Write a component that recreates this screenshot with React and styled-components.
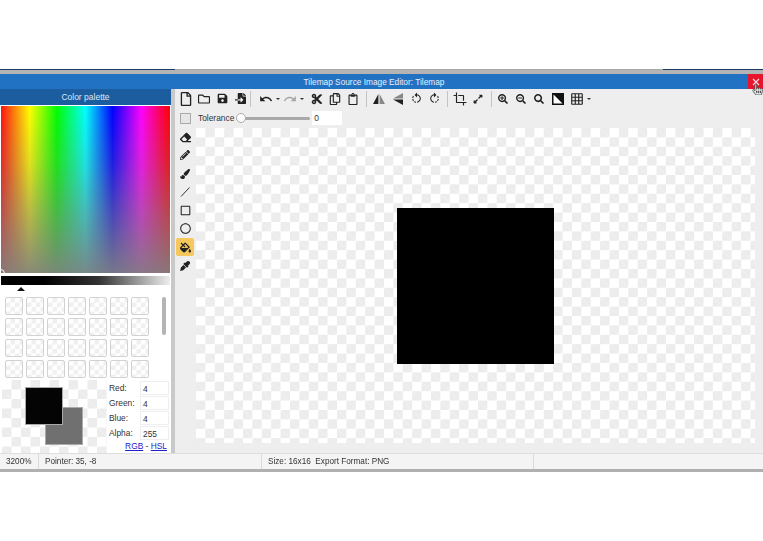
import React from 'react';
import styled, { createGlobalStyle, css } from 'styled-components';
import {
  FaRegFile, FaRegFolder, FaSave, FaFileImport, FaCut, FaRegCopy, FaRegClipboard,
  FaExpandAlt, FaSearchPlus, FaSearchMinus, FaSearch, FaEraser, FaPencilAlt, FaPaintBrush,
  FaFillDrip, FaEyeDropper, FaRegSquare, FaRegCircle, FaHandPointer,
} from 'react-icons/fa';
import { MdRotateLeft, MdRotateRight, MdGridOn, MdUndo, MdRedo, MdCrop } from 'react-icons/md';

const GlobalStyle = createGlobalStyle`
  html, body {
    margin: 0;
    background: #fff;
  }
  body {
    font-family: "Liberation Sans", Arial, sans-serif;
    font-size: 8.4px;
    color: #333;
  }
`;

const checker = (size, tone = '#ececec') => css`
  background-color: #fff;
  background-image:
    linear-gradient(45deg, ${tone} 25%, transparent 25%, transparent 75%, ${tone} 75%),
    linear-gradient(45deg, ${tone} 25%, transparent 25%, transparent 75%, ${tone} 75%);
  background-size: ${size * 2}px ${size * 2}px;
  background-position: 0 0, ${size}px ${size}px;
`;

const Page = styled.div`
  padding-top: 69px;
  height: 541px;
  box-sizing: border-box;
  overflow: hidden;
  filter: blur(0.35px);
`;

const Window = styled.div`
  position: relative;
  display: flex;
  flex-direction: column;
`;

const TopEdge = styled.div`
  height: 1px;
  background: linear-gradient(to right, #1d3f66 0, #1d3f66 175px, #a8a8a8 175px, #a8a8a8 663px, #163a63 663px);
`;

const GreyBand = styled.div`
  height: 4px;
  background: #b4b4b4;
`;

const TitleBar = styled.div`
  height: 15px;
  background: #2272c4;
  display: flex;
  align-items: center;
  justify-content: center;
  color: #e8f1fa;
  font-size: 8.3px;
  padding-right: 15px;
`;

const CloseButton = styled.div`
  position: absolute;
  right: 0;
  top: 5px;
  width: 15px;
  height: 15px;
  background: #e8132d;
  display: flex;
  align-items: center;
  justify-content: center;
`;

const Cursor = styled.div`
  position: absolute;
  left: 752px;
  top: 15px;
  color: #e4e4e4;
  font-size: 11px;
  line-height: 0;
  svg {
    stroke: #444;
    stroke-width: 36px;
  }
`;

const Body = styled.div`
  display: flex;
  height: 364px;
`;

const LeftPanel = styled.div`
  width: 171px;
  flex: none;
  background: #fff;
  display: flex;
  flex-direction: column;
`;

const PanelHeader = styled.div`
  height: 16px;
  background: #1c5d9f;
  color: #dbe8f5;
  display: flex;
  align-items: center;
  justify-content: center;
  font-size: 8.5px;
`;

const Spectrum = styled.div`
  position: relative;
  height: 167px;
  margin: 1px 1px 0;
  background:
    linear-gradient(to bottom, rgba(128, 128, 128, 0) 0%, rgba(128, 128, 128, 0.25) 35%, rgba(128, 128, 128, 0.92) 100%),
    linear-gradient(to right, #ff1010 0%, #ffff00 17%, #00ff00 33%, #00ffff 50%, #0000ff 66%, #ff00ff 83%, #ff0000 100%);
  overflow: hidden;
`;

const SpectrumMarker = styled.div`
  position: absolute;
  left: -5px;
  bottom: -5px;
  width: 7px;
  height: 7px;
  border: 1.5px solid #fff;
  border-radius: 50%;
`;

const ValueStrip = styled.div`
  height: 9px;
  margin: 3px 1px 0;
  background: linear-gradient(to right, #000 0%, #000 25%, #333 58%, #eee 100%);
`;

const ValueArrow = styled.div`
  width: 0;
  height: 0;
  margin: 2px 0 0 17px;
  border-left: 4.5px solid transparent;
  border-right: 4.5px solid transparent;
  border-bottom: 4px solid #111;
`;

const SwatchArea = styled.div`
  display: flex;
  height: 89px;
  flex: none;
  padding: 6px 0 0 5px;
  box-sizing: border-box;
  overflow: hidden;
`;

const SwatchGrid = styled.div`
  display: grid;
  grid-template-columns: repeat(7, 18px);
  grid-auto-rows: 18px;
  gap: 3px;
  width: 157px;
  flex: none;
`;

const Swatch = styled.div`
  border: 1px solid #d2d2d2;
  border-radius: 2px;
  box-sizing: border-box;
  ${checker(4.5, '#efefef')}
`;

const ScrollThumb = styled.div`
  width: 4px;
  height: 38px;
  background: #b4b4b4;
  border-radius: 2px;
`;

const ColorBox = styled.div`
  display: flex;
  flex: 1;
`;

const PreviewArea = styled.div`
  position: relative;
  width: 105px;
  margin-left: 2px;
  flex: none;
  ${checker(9.5)}
`;

const ColorChip = styled.div`
  position: absolute;
  left: ${p => p.$left}px;
  top: ${p => p.$top}px;
  width: 38px;
  height: 38px;
  box-sizing: border-box;
  border: 1px solid #aaa;
  background: ${p => p.$color};
`;

const ChannelList = styled.div`
  flex: 1;
  padding: 1px 1px 0 2px;
`;

const ChannelRow = styled.div`
  display: flex;
  align-items: center;
  height: 14.8px;
`;

const ChannelLabel = styled.div`
  width: 31px;
`;

const ChannelValue = styled.div`
  width: 29px;
  height: 14px;
  background: #fff;
  border: 1px solid #eee;
  box-sizing: border-box;
  padding: 2px 0 0 2px;
`;

const ModeLinks = styled.div`
  text-align: right;
  padding: 1px 3px 0 0;
  a {
    color: #2222cc;
    text-decoration: underline;
  }
`;

const Divider = styled.div`
  width: 4px;
  flex: none;
  background: #c9c9c9;
`;

const Workspace = styled.div`
  flex: 1;
  background: #eeeeee;
  display: flex;
  flex-direction: column;
  min-width: 0;
`;

const MainToolbar = styled.div`
  height: 19px;
  display: flex;
  align-items: center;
  padding-left: 2px;
`;

const ToolButton = styled.div`
  width: 18px;
  height: 18px;
  flex: none;
  display: flex;
  align-items: center;
  justify-content: center;
  color: #222;
  font-size: ${p => p.$size || 11}px;
  margin-left: ${p => p.$nudge || 0}px;
  opacity: ${p => (p.$disabled ? 0.35 : 1)};
`;

const Caret = styled.div`
  width: 6px;
  flex: none;
  display: flex;
  justify-content: center;
  &::after {
    content: '';
    border-left: 2px solid transparent;
    border-right: 2px solid transparent;
    border-top: 2.5px solid #333;
  }
`;

const ToolSep = styled.div`
  width: 1px;
  height: 16px;
  flex: none;
  background: #c4c4c4;
  margin-left: ${p => p.$left}px;
  margin-right: ${p => p.$right}px;
`;

const OptionsBar = styled.div`
  height: 20px;
  display: flex;
  align-items: center;
  padding-left: 5px;
`;

const CheckBox = styled.div`
  width: 11px;
  height: 11px;
  border: 1px solid #aaa;
  box-sizing: border-box;
  background: #e6e6e6;
  margin-right: 7px;
`;

const SliderTrack = styled.div`
  position: relative;
  width: 74px;
  height: 3px;
  background: #a9a9a9;
  border-radius: 2px;
  margin: 0 2px 0 2px;
`;

const SliderThumb = styled.div`
  position: absolute;
  left: 0;
  top: -4px;
  width: 10px;
  height: 10px;
  border-radius: 50%;
  background: #fff;
  border: 1px solid #aaa;
  box-sizing: border-box;
`;

const ValueInput = styled.div`
  width: 30px;
  height: 14px;
  background: #fff;
  box-sizing: border-box;
  padding: 2px 0 0 2px;
`;

const EditorRow = styled.div`
  flex: 1;
  display: flex;
  min-height: 0;
`;

const SideTools = styled.div`
  width: 21px;
  flex: none;
  display: flex;
  flex-direction: column;
  align-items: center;
  gap: 0.4px;
  padding-right: 1px;
  box-sizing: border-box;
`;

const SideTool = styled(ToolButton)`
  ${p => p.$active && css`
    background: #f5c75c;
    border-radius: 2px;
  `}
`;

const CanvasColumn = styled.div`
  flex: 1;
  padding: 0 8px 10px 0;
  display: flex;
`;

const Canvas = styled.div`
  flex: 1;
  display: flex;
  align-items: center;
  justify-content: center;
  padding-top: 1px;
  ${checker(9.4)}
`;

const Sprite = styled.div`
  width: 157px;
  height: 156px;
  background: #000;
`;

const StatusBar = styled.div`
  height: 15px;
  display: flex;
  align-items: center;
  background: #f4f4f4;
  border-top: 1px solid #dedede;
  font-size: 8.2px;
`;

const StatusCell = styled.div`
  width: ${p => p.$width}px;
  height: 100%;
  flex: none;
  display: flex;
  align-items: center;
  box-sizing: border-box;
  padding-left: ${p => p.$pad}px;
  border-right: 1px solid #dadada;
  white-space: pre;
`;

const BottomEdge = styled.div`
  height: 3px;
  background: #b0b0b0;
`;

const FlipIcon = ({ vertical }) => (
  <svg width="12" height="12" viewBox="0 0 12 12" style={{ transform: vertical ? 'rotate(-90deg)' : 'none' }}>
    <path d="M5.4 1v10H0z" fill="#222" />
    <path d="M6.6 1v10H12z" fill="#888" />
  </svg>
);

const ContrastIcon = () => (
  <svg width="12" height="12" viewBox="0 0 12 12">
    <rect x="0.75" y="0.75" width="10.5" height="10.5" fill="#fff" stroke="#111" strokeWidth="1.5" />
    <path d="M1 1h10v10z" fill="#111" />
  </svg>
);

const channels = [
  ['Red:', 4],
  ['Green:', 4],
  ['Blue:', 4],
  ['Alpha:', 255],
];

const App = () => (
  <>
    <GlobalStyle />
    <Page>
      <Window>
        <TopEdge />
        <GreyBand />
        <TitleBar>Tilemap Source Image Editor: Tilemap</TitleBar>
        <CloseButton>
          <svg width="8" height="8" viewBox="0 0 8 8"><path d="M1 1l6 6M7 1L1 7" stroke="#ffe3e6" strokeWidth="1.1" /></svg>
        </CloseButton>
        <Cursor><FaHandPointer /></Cursor>
        <Body>
          <LeftPanel>
            <PanelHeader>Color palette</PanelHeader>
            <Spectrum><SpectrumMarker /></Spectrum>
            <ValueStrip />
            <ValueArrow />
            <SwatchArea>
              <SwatchGrid>
                {Array.from({ length: 28 }, (_, i) => <Swatch key={i} />)}
              </SwatchGrid>
              <ScrollThumb />
            </SwatchArea>
            <ColorBox>
              <PreviewArea>
                <ColorChip $left={43} $top={27} $color="#707070" />
                <ColorChip $left={23} $top={7} $color="#040404" />
              </PreviewArea>
              <ChannelList>
                {channels.map(([label, value]) => (
                  <ChannelRow key={label}>
                    <ChannelLabel>{label}</ChannelLabel>
                    <ChannelValue>{value}</ChannelValue>
                  </ChannelRow>
                ))}
                <ModeLinks><a href="#rgb">RGB</a> - <a href="#hsl">HSL</a></ModeLinks>
              </ChannelList>
            </ColorBox>
          </LeftPanel>
          <Divider />
          <Workspace>
            <MainToolbar>
              <ToolButton $size={14}><FaRegFile /></ToolButton>
              <ToolButton $size={12}><FaRegFolder /></ToolButton>
              <ToolButton><FaSave /></ToolButton>
              <ToolButton><FaFileImport /></ToolButton>
              <ToolSep $left={1} $right={6} />
              <ToolButton $size={14}><MdUndo /></ToolButton>
              <Caret />
              <ToolButton $size={14} $disabled><MdRedo /></ToolButton>
              <Caret />
              <ToolButton $nudge={3} $size={12}><FaCut /></ToolButton>
              <ToolButton $size={12}><FaRegCopy /></ToolButton>
              <ToolButton $size={12}><FaRegClipboard /></ToolButton>
              <ToolSep $left={4} $right={3} />
              <ToolButton><FlipIcon /></ToolButton>
              <ToolButton $nudge={1}><FlipIcon vertical /></ToolButton>
              <ToolButton $size={13}><MdRotateLeft /></ToolButton>
              <ToolButton $size={13}><MdRotateRight /></ToolButton>
              <ToolSep $left={4} $right={3} />
              <ToolButton $size={14}><MdCrop /></ToolButton>
              <ToolButton $size={10}><FaExpandAlt /></ToolButton>
              <ToolSep $left={4} $right={2} />
              <ToolButton $size={10}><FaSearchPlus /></ToolButton>
              <ToolButton $size={10}><FaSearchMinus /></ToolButton>
              <ToolButton $size={10}><FaSearch /></ToolButton>
              <ToolButton $nudge={1}><ContrastIcon /></ToolButton>
              <ToolButton $nudge={1} $size={14}><MdGridOn /></ToolButton>
              <Caret />
            </MainToolbar>
            <OptionsBar>
              <CheckBox />
              Tolerance
              <SliderTrack><SliderThumb /></SliderTrack>
              <ValueInput>0</ValueInput>
            </OptionsBar>
            <EditorRow>
              <SideTools>
                <SideTool><FaEraser /></SideTool>
                <SideTool $size={10}><FaPencilAlt /></SideTool>
                <SideTool $size={10}><FaPaintBrush /></SideTool>
                <SideTool>
                  <svg width="12" height="12" viewBox="0 0 12 12"><path d="M2 10.5L10.5 1.5" stroke="#333" strokeWidth="1" /></svg>
                </SideTool>
                <SideTool><FaRegSquare /></SideTool>
                <SideTool><FaRegCircle /></SideTool>
                <SideTool $active><FaFillDrip /></SideTool>
                <SideTool $size={10}><FaEyeDropper /></SideTool>
              </SideTools>
              <CanvasColumn>
                <Canvas><Sprite /></Canvas>
              </CanvasColumn>
            </EditorRow>
          </Workspace>
        </Body>
        <StatusBar>
          <StatusCell $width={39} $pad={6}>3200%</StatusCell>
          <StatusCell $width={223} $pad={6}>Pointer: 35, -8</StatusCell>
          <StatusCell $width={272} $pad={6}>Size: 16x16  Export Format: PNG</StatusCell>
        </StatusBar>
        <BottomEdge />
      </Window>
    </Page>
  </>
);

export default App;
